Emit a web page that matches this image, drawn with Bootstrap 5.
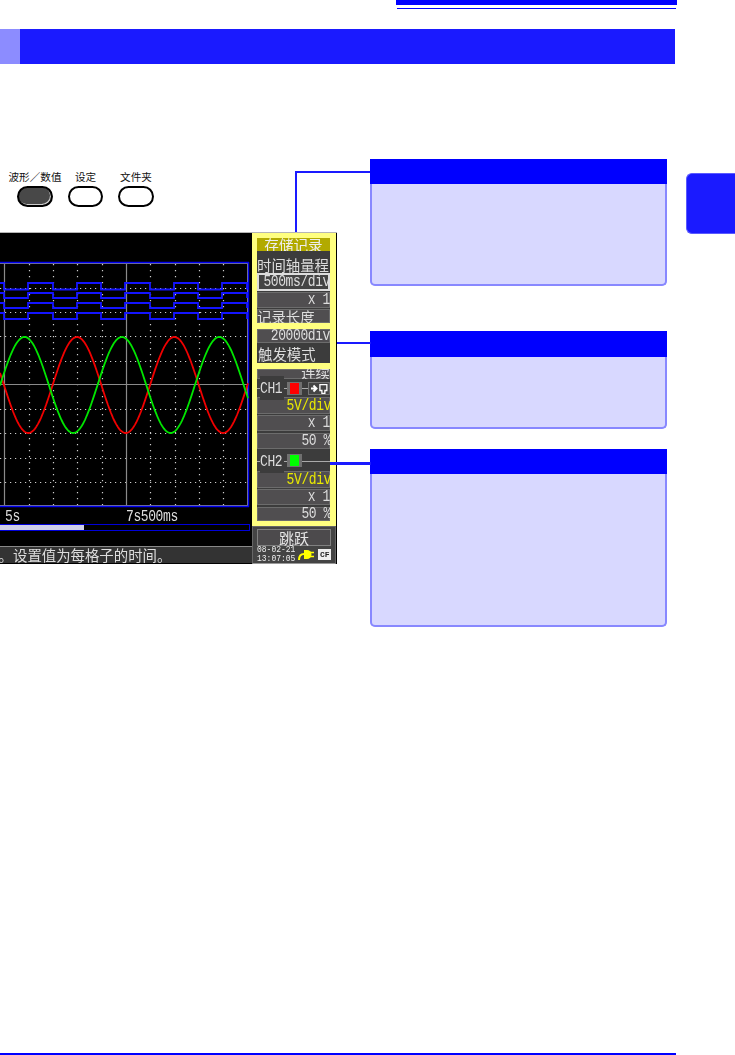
<!DOCTYPE html>
<html lang="zh">
<head>
<meta charset="utf-8">
<title>波形</title>
<link href="https://cdn.jsdelivr.net/npm/bootstrap@5.3.0/dist/css/bootstrap.min.css" rel="stylesheet">
<style>
html,body{margin:0;background:#fff;}
body{font-family:"Liberation Sans","Noto Sans CJK SC",sans-serif;}
.sheet{width:735px;height:1055px;overflow:hidden;position:relative;}
.rule-a{margin-left:396px;width:281px;height:5px;background:#00f;}
.rule-b{margin:3px 0 0 397px;width:279px;height:1px;background:#00f;}
.head{margin-top:20px;width:675px;height:35px;}
.head-a{width:20px;background:#8c8cff;}
.head-b{background:#1a1aff;}
.body-row{margin-top:95px;position:relative;}
.left-col{width:337px;}
.keys{padding:11px 0 0 17px;height:73px;gap:15px;}
.key{width:36px;}
.key-b{width:35px;}
.key-lab{font:10.6px/13px "Noto Sans CJK SC",sans-serif;color:#111;white-space:nowrap;height:16px;}
.key-btn{display:block;width:100%;height:21px;padding:0;border:2px solid #000;border-radius:11px;background:#fff;}
.key-on{background:#484848;box-shadow:inset -1px -1px 0 #ccc;}
.scr{width:337px;height:332px;background:#000;border-top:1px solid #b5b5b5;filter:blur(.45px);}
.scr-l{width:252px;flex:none;}
.plot{display:block;width:252px;height:275px;}
.mono{font-family:"Liberation Mono",monospace;color:#ddd;}
.tall{display:inline-block;transform:scaleY(1.3);white-space:nowrap;letter-spacing:-.4px;font-size:13px;line-height:14px;}
.times{height:16px;line-height:14px;font-size:13px;padding-top:2px;}
.t1{padding-left:5px;width:126px;}
.progress-line{height:7px;width:250px;border:1px solid #0000d8;border-left:0;}
.progress-line div{width:84px;height:100%;background:#cfcfe8;}
.status{margin-top:15px;height:17px;width:253px;background:#333;border-top:1px solid #888;color:#ddd;font:14.4px/16px "Noto Sans CJK SC",sans-serif;white-space:nowrap;overflow:hidden;}
.stop{display:inline-block;margin-left:-1.4px;}
.scr-r{width:84px;flex:none;}
.yel{height:293px;background:#ffff80;padding:5px 6px 5px 5px;gap:6px;}
.seg{background:#3c3c3c;overflow:hidden;}
.seg1{height:85px;}
.seg2{height:34px;}
.seg3{height:152px;}
.rw{background:#504e50;box-shadow:inset 0 0 0 1px #6c6c6c;color:#ddd;overflow:hidden;}
.rw.mono{display:flex;align-items:center;justify-content:flex-end;}
.cn{font:14.4px/16px "Noto Sans CJK SC",sans-serif;color:#ddd;white-space:nowrap;overflow:hidden;}
.ttl{height:13px;background:#b2aa00;margin-bottom:6px;color:#eee;font-size:14.6px;line-height:13px;text-align:center;}
.lift{margin-top:-5px;}
.h10{height:10px;}.h14{height:14px;}.h16{height:16px;}.h17{height:17px;}.h18{height:18px;}.h19{height:19px;}.h20{height:20px;line-height:21px;padding-left:1px;}
.mb1px{margin-bottom:1px;}.mb2px{margin-bottom:2px;}
.sel{box-shadow:inset 0 0 0 2px #ddd;background:#444;}
.ylw{color:#e9e900;}
.push{margin-right:-1px;}
.ch{position:relative;padding-left:3px;}
.ch::before{content:"";position:absolute;left:0;right:0;top:50%;height:1px;background:#aaa;}
.ch-name{position:relative;background:#3c3c3c;padding-right:2px;}
.swatch{position:relative;box-sizing:border-box;width:15px;height:13px;border:2px solid #707070;border-width:1px 3px;margin-left:3px;}
.sw-r{background:#f00;}
.sw-g{background:#0f0;}
.probe{position:relative;margin-left:6px;display:block;width:22px;height:13px;}
.ctl{height:38px;background:#444;border:1px solid #666;border-bottom-color:#999;padding:2px 4px 0 4px;}
.jump{height:17px;background:#4c4a4c;box-shadow:inset 0 0 0 1px #808080;color:#e6e6e6;font:15px/17px "Noto Sans CJK SC",sans-serif;text-align:center;}
.clock{font:8px/8px "Liberation Mono",monospace;color:#eee;white-space:nowrap;transform:scaleY(1.1);}
.plug{margin-left:3px;margin-top:3px;}
.cf{width:13px;height:11px;background:#eee;color:#222;font:700 8px/11px "Liberation Mono",monospace;text-align:center;margin:3px 0 0 4px;}
.call-col{width:297px;margin-left:33px;}
.callout{border:0;border-radius:0 0 5px 5px;background:#d8d8ff;position:relative;}
.callout .card-header{background:#00f;border:0;border-radius:0;padding:0;height:25px;}
.callout .card-body{border:solid #8888ff;border-width:0 2px 2px 2px;border-radius:0 0 5px 5px;padding:0;}
.c1 .card-body{height:102px;}
.c2{margin-top:45px;}
.c2 .card-header{height:26px;}
.c2 .card-body{height:72px;}
.c3{margin-top:20px;}
.c3 .card-body{height:153px;}
.side-tab{margin:14px 0 0 19px;width:49px;height:61px;background:#1a1aff;border:1px solid #5a5aff;border-right:0;border-radius:6px 0 0 6px;}
.wire{position:absolute;background:#1a1aff;height:2px;z-index:3;}
.w2{left:-33px;width:34px;top:11px;}
.w3{left:-40px;width:41px;top:13px;height:3px;}
.elbow{position:absolute;left:295px;top:12px;width:75px;height:61px;border:solid #1a1aff;border-width:2.5px 0 0 2.5px;z-index:3;}
.foot{position:absolute;left:0;bottom:0;width:676px;height:2px;background:#00f;}
</style>
</head>
<body>
<div class="sheet">
  <div class="rule-a"></div>
  <div class="rule-b"></div>
  <div class="head d-flex"><div class="head-a"></div><div class="head-b flex-grow-1"></div></div>
  <div class="body-row d-flex align-items-start">
    <div class="elbow"></div>
    <div class="left-col">
      <div class="keys d-flex">
        <div class="key d-flex flex-column align-items-center"><div class="key-lab">波形／数值</div><button class="key-btn key-on" type="button" aria-label="波形／数值"></button></div>
        <div class="key key-b d-flex flex-column align-items-center"><div class="key-lab">设定</div><button class="key-btn" type="button" aria-label="设定"></button></div>
        <div class="key d-flex flex-column align-items-center"><div class="key-lab">文件夹</div><button class="key-btn" type="button" aria-label="文件夹"></button></div>
      </div>
      <div class="scr d-flex">
        <div class="scr-l">
          <svg class="plot" id="plot" viewBox="0 233 252 275" xmlns="http://www.w3.org/2000/svg"></svg>
          <div class="times d-flex mono"><div class="t1"><span class="tall">5s</span></div><div><span class="tall">7s500ms</span></div></div>
          <div class="progress-line"><div></div></div>
          <div class="status"><span class="stop">。</span>设置值为每格子的时间。</div>
        </div>
        <div class="scr-r">
          <div class="yel d-flex flex-column">
            <div class="seg seg1">
              <div class="cn ttl">存储记录</div>
              <div class="cn h16">时间轴量程</div>
              <div class="rw sel h18 mono mb1px"><span class="tall">500ms/div</span></div>
              <div class="rw h16 mono mb1px"><span class="tall">x 1</span></div>
              <div class="rw h14 cn">记录长度</div>
            </div>
            <div class="seg seg2">
              <div class="rw h14 mono"><span class="tall">20000div</span></div>
              <div class="cn h20">触发模式</div>
            </div>
            <div class="seg seg3">
              <div class="rw h10 cn text-end"><div class="lift">连续</div></div>
              <div class="ch h18 d-flex align-items-center mono">
                <span class="ch-name"><span class="tall">CH1</span></span>
                <span class="swatch sw-r"></span>
                <svg class="probe" viewBox="0 0 22 13" xmlns="http://www.w3.org/2000/svg"><rect x=".5" y=".5" width="21" height="12" fill="#444" stroke="#777"/><path d="M3 6.500h4.500M5.500 3.500l3 3-3 3" fill="none" stroke="#fff" stroke-width="2"/><path d="M12 2.500h7v6h-2v3h-3v-3h-2z" fill="none" stroke="#fff" stroke-width="1.300"/></svg>
              </div>
              <div class="rw h17 mono ylw mb1px"><span class="tall push ylw">5V/div</span></div>
              <div class="rw h16 mono mb2px"><span class="tall">x 1</span></div>
              <div class="rw h16 mono mb2px"><span class="tall push">50 %</span></div>
              <div class="ch h19 d-flex align-items-center mono mb1px">
                <span class="ch-name"><span class="tall">CH2</span></span>
                <span class="swatch sw-g"></span>
              </div>
              <div class="rw h17 mono ylw mb1px"><span class="tall push ylw">5V/div</span></div>
              <div class="rw h16 mono mb2px"><span class="tall">x 1</span></div>
              <div class="rw h14 mono"><span class="tall push">50 %</span></div>
            </div>
          </div>
          <div class="ctl">
            <div class="jump">跳跃</div>
            <div class="d-flex align-items-start">
              <div class="clock">08-02-21<br>13:07:05</div>
              <svg class="plug flex-shrink-0" width="16" height="11" viewBox="0 0 16 11" xmlns="http://www.w3.org/2000/svg"><path d="M1 11c0-4 2-6 5-6" fill="none" stroke="#ff0" stroke-width="2"/><path d="M6 1h3a4 4 0 0 1 0 9H6z" fill="#ff0"/><path d="M11 3.500h5M11 7.500h5" stroke="#ff0" stroke-width="1.600"/></svg>
              <div class="cf">CF</div>
            </div>
          </div>
        </div>
      </div>
    </div>
    <div class="call-col">
      <div class="card callout c1"><div class="card-header"></div><div class="card-body"></div></div>
      <div class="card callout c2"><div class="wire w2"></div><div class="card-header"></div><div class="card-body"></div></div>
      <div class="card callout c3"><div class="wire w3"></div><div class="card-header"></div><div class="card-body"></div></div>
    </div>
    <div class="side-tab"></div>
  </div>
  <div class="foot"></div>
</div>
<script src="https://cdn.jsdelivr.net/npm/bootstrap@5.3.0/dist/js/bootstrap.bundle.min.js"></script>
<script>
(function(){
  var s='';
  function line(d,st,w,extra){s+='<path d="'+d+'" fill="none" stroke="'+st+'" stroke-width="'+w+'" '+(extra||'')+'/>';}
  var vx=[29,53,77,102,150,175,199,223], hy=[288,312,336.5,361,409,433,458,482];
  vx.forEach(function(x){line('M'+(x+.5)+' 264V506','#ccc',1.2,'stroke-dasharray="1.2 4.8"');});
  hy.forEach(function(y){line('M0 '+(Math.floor(y)+.5)+'H248','#ccc',1.2,'stroke-dasharray="1.2 3.8"');});
  line('M4.5 263V506M126.5 263V506','#8a8a8a',1.2);
  line('M0 384.5H248','#8a8a8a',1.2);
  line('M0 263.5H248','#8a8a8a',1);
  line('M247.5 263V506','#8a8a8a',1);
  line('M0 505.5H248','#8a8a8a',1);
  line('M0 262.5H249M248.5 262V507M0 506.5H249','#0000f0',1.4);
  var edges=[4,28,53,77,101,125,150,174,198,222,247];
  [[283,289.5],[293,298],[303,308],[313,319]].forEach(function(l){
    var d='M0 '+l[0]+'H4V'+l[1], high=false;
    for(var i=1;i<edges.length;i++){d+='H'+edges[i]+'V'+(high?l[1]:l[0]);high=!high;}
    line(d,'#1414ff',1.8);
  });
  function wave(px){var d='';for(var x=0;x<=248;x+=1){var y=385-48*Math.cos(2*Math.PI*(x-px)/97.4);d+=(x?'L':'M')+x+' '+y.toFixed(1);}return d;}
  line(wave(77),'#f00000',1.8);
  line(wave(24.5),'#00e600',1.8);
  document.getElementById('plot').innerHTML=s;
})();
</script>
</body>
</html>
